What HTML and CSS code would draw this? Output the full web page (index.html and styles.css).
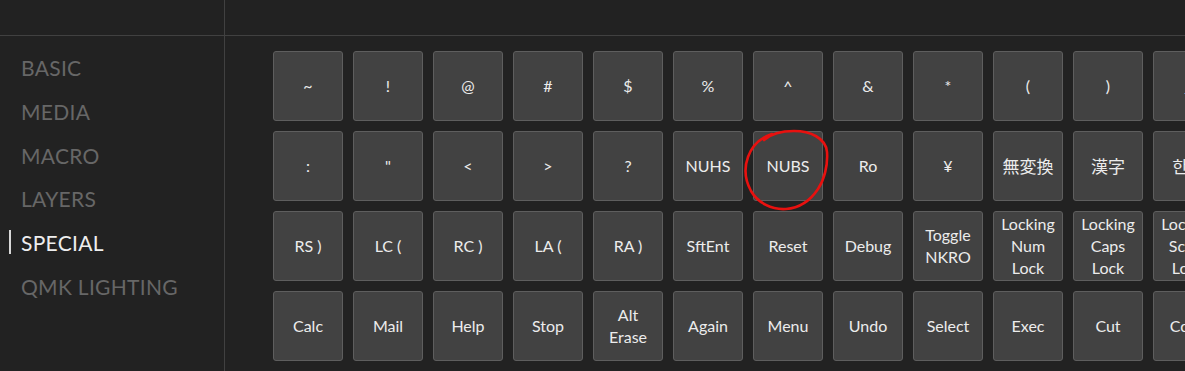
FILE: index.html
```html
<!DOCTYPE html>
<html lang="en">
<head>
  <meta charset="UTF-8" />
  <title>Keycodes</title>
  <link rel="stylesheet" href="styles.css">
</head>
<body>

<div class="topbar">
  <div class="topbar-left"></div>
  <div class="topbar-right"></div>
</div>

<div class="panel">
  <ul class="menu">
    <li>BASIC</li>
    <li>MEDIA</li>
    <li>MACRO</li>
    <li>LAYERS</li>
    <li class="active">SPECIAL</li>
    <li>QMK LIGHTING</li>
  </ul>

  <div class="keys">
    <div class="key">~</div>
    <div class="key">!</div>
    <div class="key">@</div>
    <div class="key">#</div>
    <div class="key">$</div>
    <div class="key">%</div>
    <div class="key">^</div>
    <div class="key">&amp;</div>
    <div class="key">*</div>
    <div class="key">(</div>
    <div class="key">)</div>
    <div class="key">_</div>

    <div class="key">:</div>
    <div class="key">"</div>
    <div class="key">&lt;</div>
    <div class="key">&gt;</div>
    <div class="key">?</div>
    <div class="key">NUHS</div>
    <div class="key">NUBS
      <svg class="circle" width="90" height="86" viewBox="0 0 90 86">
        <path d="M22 12 C30 5 42 3 52 3 C68 3 84 10 85 24 C86 38 82 52 76 61 C68 73 58 80 44 81 C30 82 16 75 9 63 C3 52 2 40 6 29 C10 18 18 10 30 6" fill="none" stroke="#e8110f" stroke-width="2.6" stroke-linecap="round"/>
      </svg>
    </div>
    <div class="key">Ro</div>
    <div class="key">¥</div>
    <div class="key cjk">無変換</div>
    <div class="key cjk">漢字</div>
    <div class="key kr">한영</div>

    <div class="key">RS )</div>
    <div class="key">LC (</div>
    <div class="key">RC )</div>
    <div class="key">LA (</div>
    <div class="key">RA )</div>
    <div class="key">SftEnt</div>
    <div class="key">Reset</div>
    <div class="key">Debug</div>
    <div class="key">Toggle<br>NKRO</div>
    <div class="key">Locking<br>Num<br>Lock</div>
    <div class="key">Locking<br>Caps<br>Lock</div>
    <div class="key">Locking<br>Scroll<br>Lock</div>

    <div class="key">Calc</div>
    <div class="key">Mail</div>
    <div class="key">Help</div>
    <div class="key">Stop</div>
    <div class="key">Alt<br>Erase</div>
    <div class="key">Again</div>
    <div class="key">Menu</div>
    <div class="key">Undo</div>
    <div class="key">Select</div>
    <div class="key">Exec</div>
    <div class="key">Cut</div>
    <div class="key">Copy</div>
  </div>
</div>

</body>
</html>
```

FILE: styles.css
```css
body {
  margin: 0;
  background: #222222;
  font-family: Lato, "Noto Sans", sans-serif;
  overflow: hidden;
  height: 371px;
}

.topbar {
  display: flex;
  height: 35px;
  border-bottom: 1px solid #414141;
}

.topbar-left {
  width: 224px;
  border-right: 1px solid #414141;
}

.panel {
  display: flex;
  height: 335px;
}

.menu {
  list-style: none;
  margin: 0;
  padding: 19px 0 0 0;
  width: 224px;
  flex-shrink: 0;
  border-right: 1px solid #414141;
}

.menu li {
  position: relative;
  height: 43.8px;
  line-height: 26px;
  padding-left: 21px;
  font-size: 21px;
  color: #676767;
  letter-spacing: 0.3px;
}

.menu li.active {
  color: #eeeeee;
}

.menu li.active::before {
  content: "";
  position: absolute;
  left: 9px;
  top: 0;
  width: 2px;
  height: 24px;
  background: #d8d8d8;
}

.keys {
  display: grid;
  grid-template-columns: repeat(12, 70px);
  grid-auto-rows: 70px;
  gap: 10px;
  padding: 15px 0 0 48px;
}

.key {
  position: relative;
  display: flex;
  align-items: center;
  justify-content: center;
  text-align: center;
  box-sizing: border-box;
  background: #424242;
  border: 1px solid #5e5e5e;
  border-radius: 3px;
  color: #ececec;
  font-size: 16px;
  line-height: 22px;
}

.cjk {
  font-family: "Noto Sans CJK JP", sans-serif;
  font-size: 17px;
}

.kr {
  font-family: "Noto Sans CJK KR", sans-serif;
  font-size: 17px;
}

.circle {
  position: absolute;
  left: -12px;
  top: -4px;
  pointer-events: none;
}
```
